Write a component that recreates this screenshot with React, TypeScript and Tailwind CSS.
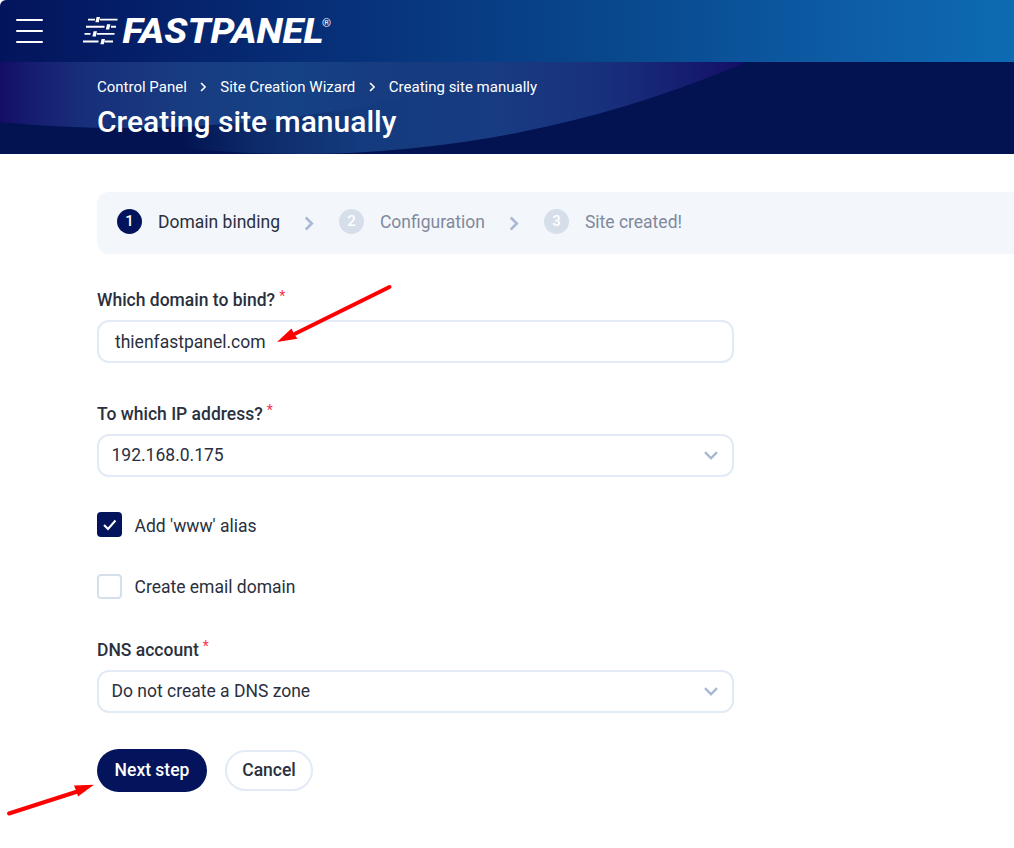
import React from "react";

function Chevron({ className }: { className?: string }) {
  return (
    <svg className={className} viewBox="0 0 10 16" fill="none">
      <path d="M1.5 1.6 8 8l-6.500 6.400" stroke="currentColor" strokeWidth="2.7" />
    </svg>
  );
}

function Logo() {
  return (
    <svg width="254" height="62" viewBox="80 0 254 62" className="block shrink-0 overflow-visible">
      <g stroke="#fff" strokeWidth="1.9" fill="none">
        <path d="M88 19.600h7M100 19.600h17.500M86 26.700h18.500M111 26.700h5M84.500 33.900h6M97 33.900h17.500M83 41.500h15.500M104.500 41.500h8.500" />
      </g>
      <g fill="#fff">
        <path d="M96.600 17h3.400l-1.200 5.200h-3.400zM107 24.300h3.400l-1.200 5.200h-3.400zM93.600 31.300H97l-1.200 5.200h-3.400zM101.600 39h3.400l-1.200 5.200h-3.400z" />
        <text
          x="122.500"
          y="43.200"
          textLength="201"
          lengthAdjust="spacingAndGlyphs"
          fontFamily="Roboto, sans-serif"
          fontWeight="800"
          fontStyle="italic"
          fontSize="35.500"
        >
          FASTPANEL
        </text>
        <text x="322" y="26.500" fontFamily="Roboto, sans-serif" fontSize="11.500">®</text>
      </g>
    </svg>
  );
}

function HeroArcs() {
  return (
    <svg className="absolute inset-0" width="1014" height="92" viewBox="0 62 1014 92">
      <defs>
        <linearGradient id="wide" gradientUnits="userSpaceOnUse" x1="0" x2="750" y1="0" y2="0">
          <stop offset="0.240" stopColor="#031351" />
          <stop offset="0.340" stopColor="#0d2a69" />
          <stop offset="0.480" stopColor="#143b7e" />
          <stop offset="0.660" stopColor="#183b81" />
          <stop offset="0.800" stopColor="#18317d" />
          <stop offset="0.920" stopColor="#151d70" />
          <stop offset="1" stopColor="#140c65" />
        </linearGradient>
        <linearGradient id="near" gradientUnits="userSpaceOnUse" x1="0" x2="530" y1="0" y2="0">
          <stop offset="0" stopColor="#140d66" />
          <stop offset="0.060" stopColor="#161d71" />
          <stop offset="0.160" stopColor="#182f7b" />
          <stop offset="0.350" stopColor="#183c81" />
          <stop offset="0.560" stopColor="#154285" />
          <stop offset="0.700" stopColor="#173c80" />
          <stop offset="0.850" stopColor="#183b81" stopOpacity="0" />
        </linearGradient>
      </defs>
      <circle cx="299" cy="-979" r="1133" fill="url(#wide)" />
      <circle cx="125" cy="-1172" r="1300" fill="url(#near)" />
    </svg>
  );
}

function Step({ n, label, active }: { n: number; label: string; active?: boolean }) {
  return (
    <div className="flex items-center">
      <span
        className={
          active
            ? "flex h-[25px] w-[25px] items-center justify-center rounded-full bg-[#03145c] pb-px text-[15px] font-medium leading-none text-white"
            : "flex h-[25px] w-[25px] items-center justify-center rounded-full bg-[#d6deea] pb-px text-[15px] font-medium leading-none text-white"
        }
      >
        {n}
      </span>
      <span className={active ? "relative top-px ml-4 text-[17.500px] leading-[25px] text-[#2a303e]" : "relative top-px ml-4 text-[17.500px] leading-[25px] text-[#7f899d]"}>{label}</span>
    </div>
  );
}

function Label({ children }: { children: React.ReactNode }) {
  return (
    <div className="flex h-6 items-center text-[17.500px] font-medium leading-6">
      {children}
      <span className="relative -top-[4px] ml-[4px] text-[14px] font-normal text-[#f5324f]">*</span>
    </div>
  );
}

function Select({ value }: { value: string }) {
  return (
    <div className="flex h-[43px] w-[637px] items-center justify-between rounded-xl border-2 border-[#e1eaf5] pb-[1px] pl-[12.500px] pr-[14px] text-[17.500px]">
      {value}
      <Chevron className="mr-[2px] h-[15px] w-[10px] rotate-90 text-[#abb8d3]" />
    </div>
  );
}

export default function App() {
  return (
    <div className="relative h-[848px] w-[1014px] overflow-hidden bg-white font-[Roboto,sans-serif] text-[#2a303e]">
      <header className="flex h-[62px] items-center rounded-tl-[6px] bg-[linear-gradient(90deg,#03145c_0%,#07317a_34%,#09498e_62%,#0d5ca5_83%,#0d6bb2_100%)] pl-[15.500px]">
        <div className="flex w-[27.500px] flex-col gap-[9px]">
          <i className="h-[2px] rounded bg-white" />
          <i className="h-[2px] rounded bg-white" />
          <i className="h-[2px] rounded bg-white" />
        </div>
        <div className="ml-[37px]">
          <Logo />
        </div>
      </header>
      <section className="relative h-[92px] bg-[#031351] pl-[97px] text-white">
        <HeroArcs />
        <div className="relative pt-[15px]">
          <nav className="flex h-5 items-center text-[15px]">
            <span>Control Panel</span>
            <Chevron className="ml-[13px] mr-[14px] h-[10px] w-[6.500px]" />
            <span>Site Creation Wizard</span>
            <Chevron className="ml-[13.500px] mr-[13.500px] h-[10px] w-[6.500px]" />
            <span>Creating site manually</span>
          </nav>
          <h1 className="mt-[7px] text-[30px] font-medium leading-9">Creating site manually</h1>
        </div>
      </section>
      <main className="pl-[97px] pt-[38px]">
        <div className="flex h-[62px] items-center rounded-l-xl bg-[#f3f6fb] pb-[3px] pl-5">
          <Step n={1} label="Domain binding" active />
          <Chevron className="relative top-[2px] ml-6 mr-[25px] h-[15px] w-[10px] text-[#abb8d3]" />
          <Step n={2} label="Configuration" />
          <Chevron className="relative top-[2px] ml-6 mr-[25px] h-[15px] w-[10px] text-[#abb8d3]" />
          <Step n={3} label="Site created!" />
        </div>
        <div className="mt-[34px]">
          <Label>Which domain to bind?</Label>
          <div className="mt-2 flex h-[43px] w-[637px] items-center rounded-xl border-2 border-[#e1eaf5] pl-4 pt-[2px] text-[17.500px]">
            thienfastpanel.com
          </div>
        </div>
        <div className="mt-[39px]">
          <Label>To which IP address?</Label>
          <div className="mt-2">
            <Select value="192.168.0.175" />
          </div>
        </div>
        <div className="mt-[35px] flex h-[25px] items-center text-[17.500px]">
          <span className="mr-[12.500px] flex h-[25px] w-[25px] items-center justify-center rounded bg-[#03145c]">
            <svg width="14" height="12" viewBox="0 0 14 12" fill="none">
              <path d="m1 6 4 4L12.500 1.500" stroke="#fff" strokeWidth="2" />
            </svg>
          </span>
          <span className="pt-[3px]">Add 'www' alias</span>
        </div>
        <div className="mt-[37px] flex h-[25px] items-center text-[17.500px]">
          <span className="mr-[12.500px] h-[25px] w-[25px] rounded border-2 border-[#d6e0ec]" />
          <span className="pt-px">Create email domain</span>
        </div>
        <div className="mt-[39px]">
          <Label>DNS account</Label>
          <div className="mt-2">
            <Select value="Do not create a DNS zone" />
          </div>
        </div>
        <div className="mt-9 flex items-center text-[17.500px] font-medium">
          <div className="flex h-[43px] w-[110px] items-center justify-center rounded-full bg-[#03145c] text-white">Next step</div>
          <div className="ml-[18px] flex h-[41px] w-[88px] items-center justify-center rounded-full border-2 border-[#e1eaf5]">Cancel</div>
        </div>
      </main>
      <svg className="pointer-events-none absolute inset-0" width="1014" height="848" viewBox="0 0 1014 848" fill="#f00">
        <path d="M389.500 287 294 334.300" stroke="#f00" strokeWidth="4" strokeLinecap="round" />
        <path d="m277 342 14.500-13.500L294 334l3.500 4.700z" />
        <path d="M9 813.500 79 791" stroke="#f00" strokeWidth="4" strokeLinecap="round" />
        <path d="M94 784.700 74 785.500l2.500 6L78 796.500z" />
      </svg>
    </div>
  );
}
